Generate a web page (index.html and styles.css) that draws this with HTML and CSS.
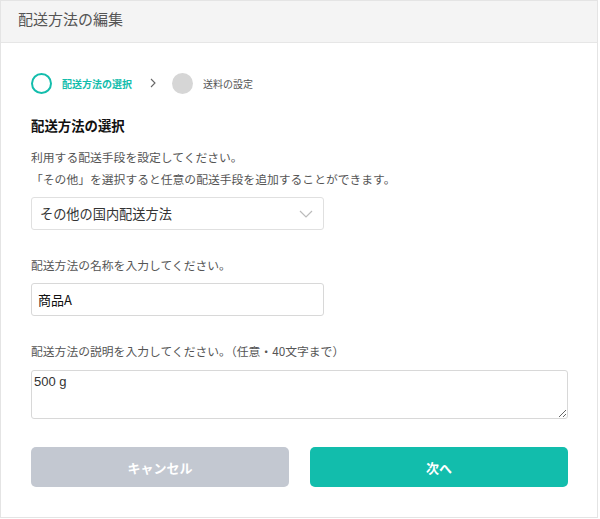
FILE: index.html
```html
<!DOCTYPE html>
<html lang="ja">

<head>
    <meta charset="UTF-8">
    <meta name="viewport" content="width=device-width, initial-scale=1.0">
    <title>配送方法の編集</title>
    <link rel="stylesheet" href="styles.css">
</head>

<body>
    <div class="panel">
        <div class="panel-head">配送方法の編集</div>
        <div class="panel-body">
            <div class="steps">
                <div class="step active">
                    <span class="dot"></span>
                    <span>配送方法の選択</span>
                </div>
                <svg class="arrow" width="6" height="10" viewBox="0 0 6 10">
                    <path d="M1 1 L5 5 L1 9" fill="none" stroke="#666" stroke-width="1.1" />
                </svg>
                <div class="step">
                    <span class="dot"></span>
                    <span>送料の設定</span>
                </div>
            </div>

            <h3 class="title">配送方法の選択</h3>
            <p class="note">利用する配送手段を設定してください。<br>「その他」を選択すると任意の配送手段を追加することができます。</p>
            <div class="select">
                <span>その他の国内配送方法</span>
                <svg width="14" height="8" viewBox="0 0 14 8">
                    <path d="M1 1 L7 7 L13 1" fill="none" stroke="#bbb" stroke-width="1.2" />
                </svg>
            </div>

            <p class="label">配送方法の名称を入力してください。</p>
            <input class="text-input" type="text" value="商品A">

            <p class="label">配送方法の説明を入力してください。（任意・40文字まで）</p>
            <textarea class="text-area">500 g</textarea>

            <div class="btn-wrap">
                <button class="btn cancel">キャンセル</button>
                <button class="btn next">次へ</button>
            </div>
        </div>
    </div>
</body>

</html>
```

FILE: styles.css
```css
body,
html {
    margin: 0;
    padding: 0;
    background: #fff;
    font-family: "Noto Sans CJK JP", "Noto Sans", sans-serif;
    color: #555;
}

.panel {
    width: 598px;
    height: 518px;
    box-sizing: border-box;
    border: 1px solid #e4e4e4;
}

.panel-head {
    height: 41px;
    line-height: 36px;
    padding-left: 17px;
    font-size: 15px;
    color: #555;
    background: #f4f4f4;
    border-bottom: 1px solid #e6e6e6;
}

.panel-body {
    padding: 0 29px 0 30px;
}

.steps {
    display: flex;
    align-items: center;
    height: 22px;
    padding-top: 29px;
}

.step {
    display: flex;
    align-items: center;
    font-size: 10px;
    color: #555;
}

.step .dot {
    width: 21px;
    height: 21px;
    box-sizing: border-box;
    border-radius: 50%;
    background: #d6d6d6;
    margin-right: 10px;
}

.step.active {
    color: #13bdac;
    font-weight: bold;
}

.step.active .dot {
    background: #fff;
    border: 2px solid #13bdac;
}

.arrow {
    margin: 0 16px 0 18px;
}

.title {
    margin: 21px 0 0;
    font-size: 13.4px;
    line-height: 20px;
    color: #111;
}

.note {
    margin: 11px 0 0;
    font-size: 11.8px;
    line-height: 22px;
}

.select {
    width: 293px;
    height: 33px;
    box-sizing: border-box;
    margin-top: 7px;
    padding: 0 10px 0 8px;
    border: 1px solid #e0e0e0;
    border-radius: 3px;
    display: flex;
    align-items: center;
    justify-content: space-between;
    font-size: 13.2px;
    color: #333;
}

.label {
    margin: 25px 0 0;
    font-size: 11.8px;
    line-height: 20px;
}

.text-input {
    display: block;
    width: 293px;
    height: 33px;
    box-sizing: border-box;
    margin-top: 8px;
    padding: 0 6px;
    border: 1px solid #d8d8d8;
    border-radius: 3px;
    font-family: "Noto Sans CJK JP", sans-serif;
    font-size: 13px;
    color: #111;
    outline: none;
}

.text-input + .label {
    margin-top: 25px;
}

.text-area {
    display: block;
    width: 537px;
    height: 49px;
    box-sizing: border-box;
    margin-top: 9px;
    padding: 3px 2px;
    border: 1px solid #d8d8d8;
    border-radius: 3px;
    font-family: "Liberation Sans", sans-serif;
    font-size: 13px;
    color: #333;
    outline: none;
}

.btn-wrap {
    display: flex;
    gap: 21px;
    margin-top: 28px;
}

.btn {
    flex: 1;
    height: 40px;
    border: none;
    border-radius: 5px;
    color: #fff;
    font-family: "Noto Sans CJK JP", sans-serif;
    font-size: 13px;
    font-weight: bold;
}

.btn.cancel {
    background: #c3c8d1;
}

.btn.next {
    background: #12bdac;
}
```
